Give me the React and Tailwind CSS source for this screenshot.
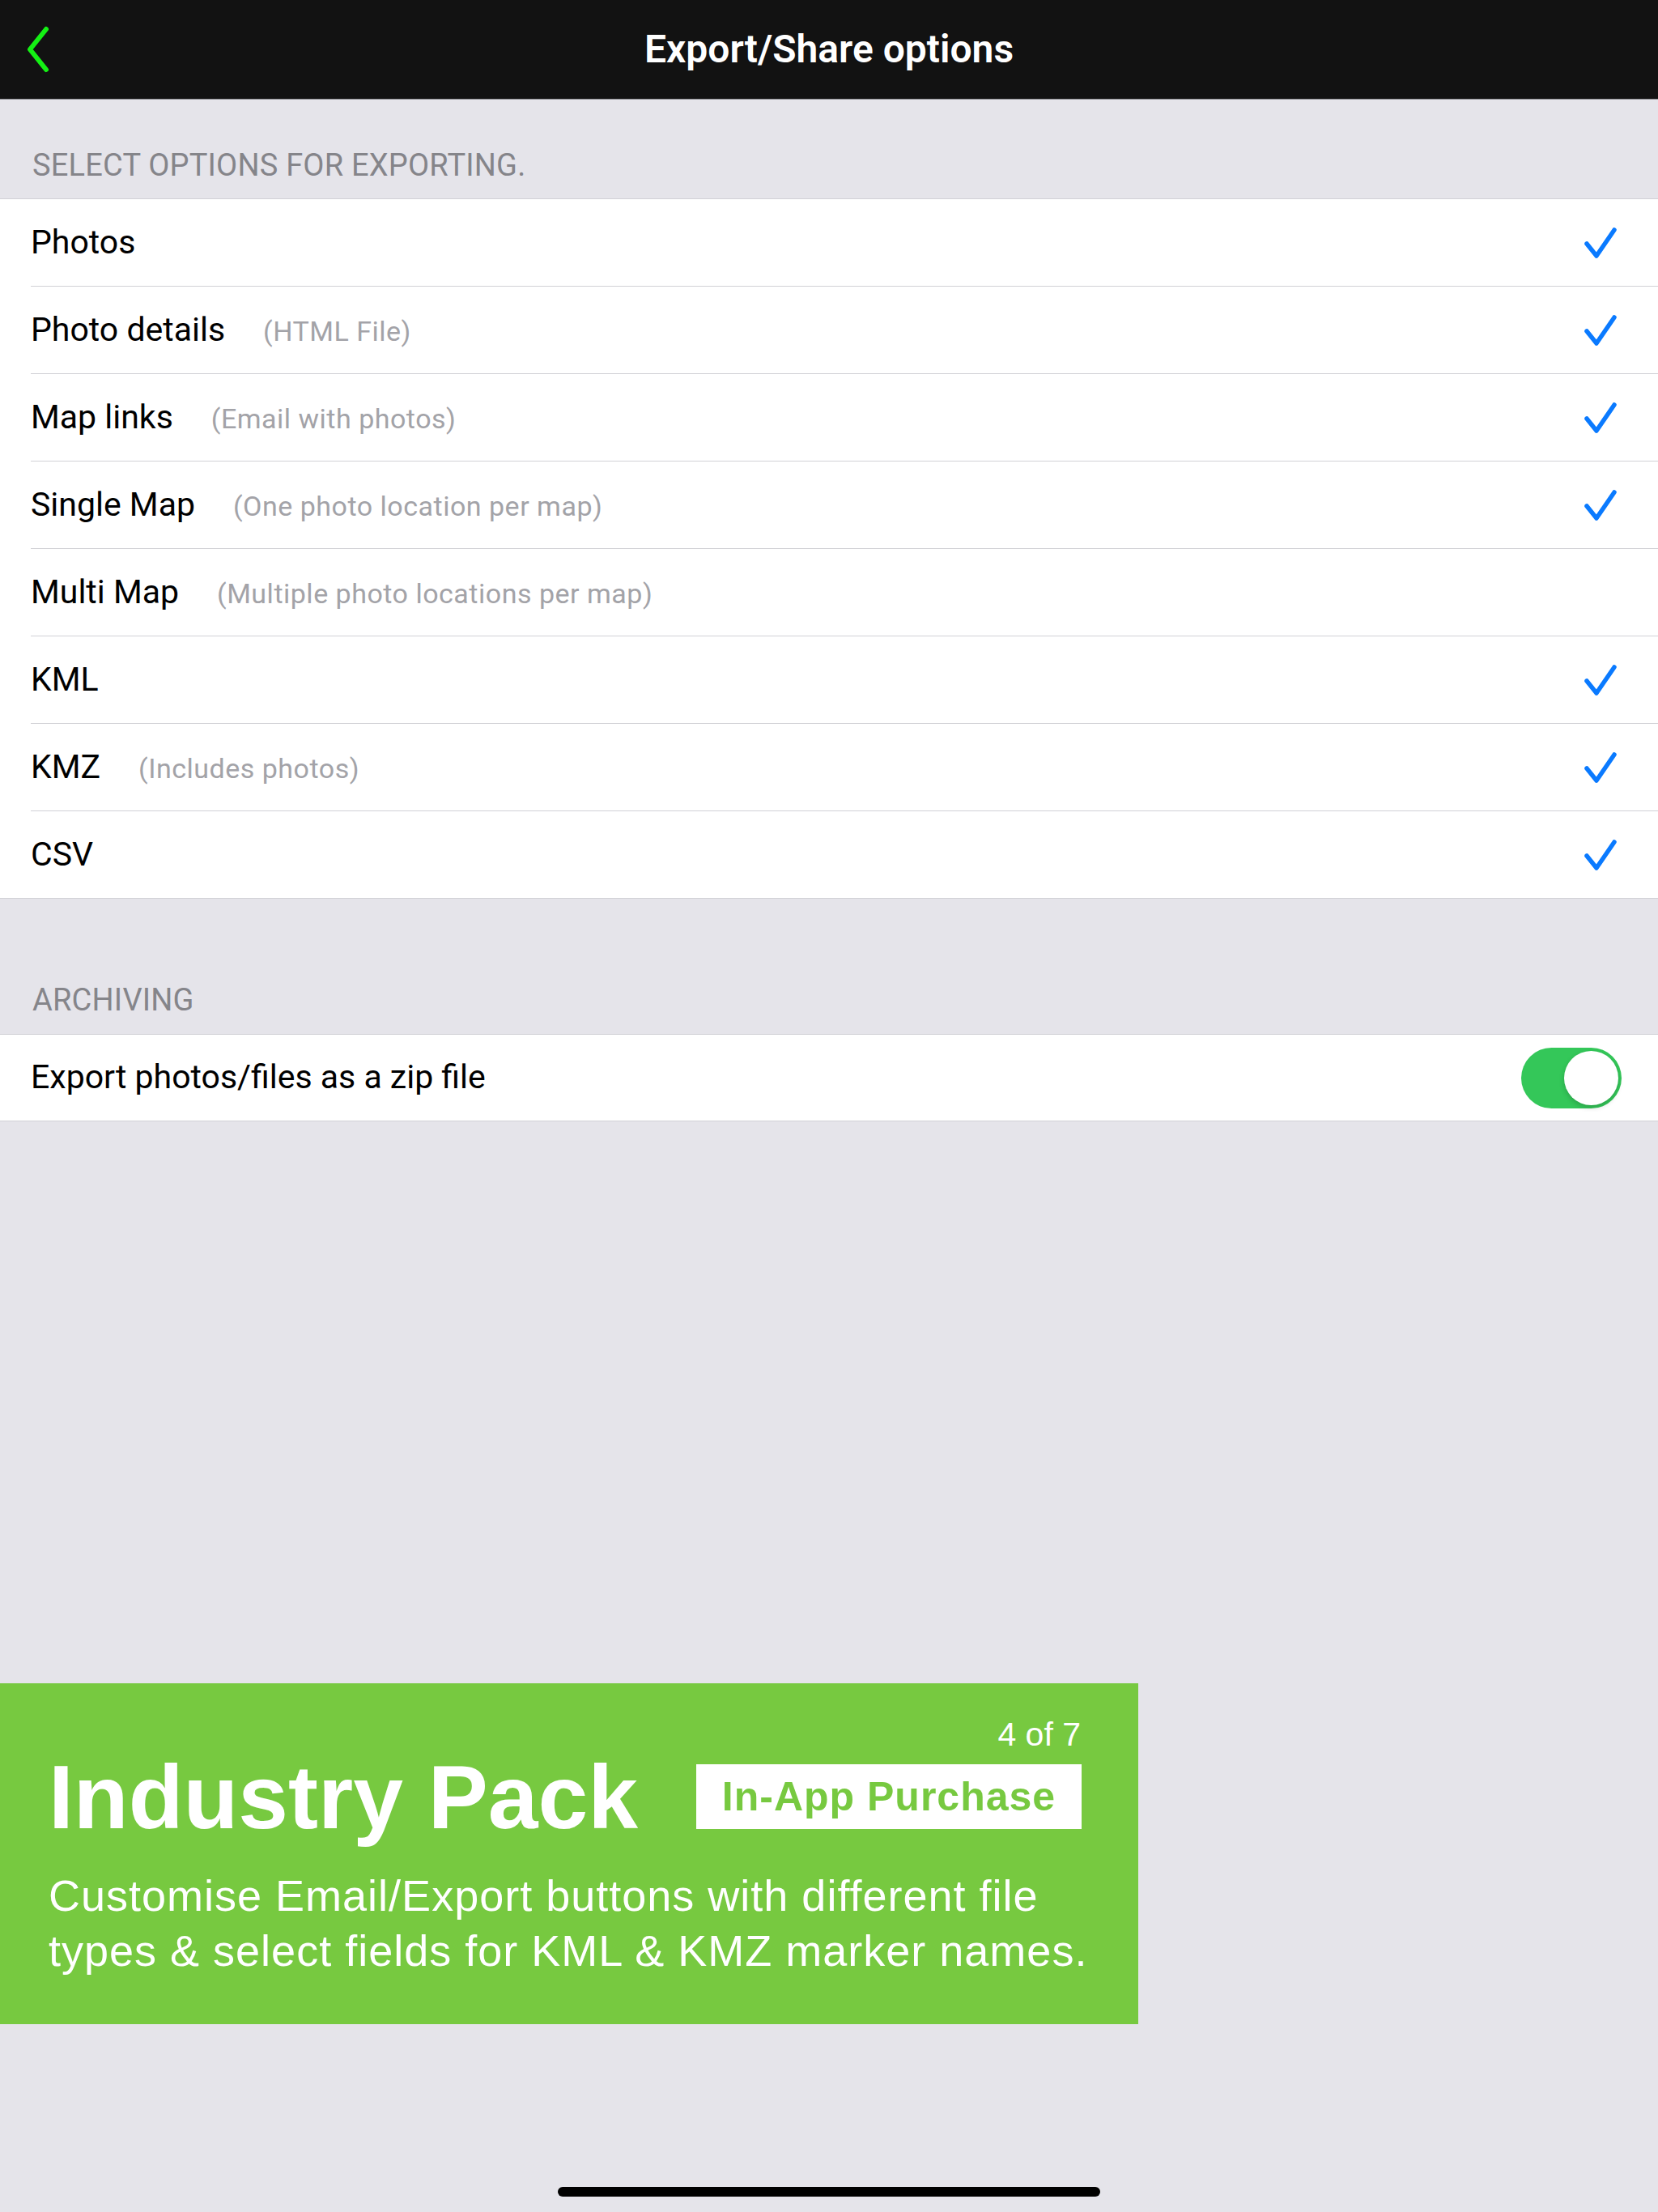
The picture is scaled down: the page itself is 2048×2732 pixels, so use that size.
import React from "react";

const rows = [
  { label: "Photos", sub: "", checked: true },
  { label: "Photo details", sub: "(HTML File)", checked: true },
  { label: "Map links", sub: "(Email with photos)", checked: true },
  { label: "Single Map", sub: "(One photo location per map)", checked: true },
  { label: "Multi Map", sub: "(Multiple photo locations per map)", checked: false },
  { label: "KML", sub: "", checked: true },
  { label: "KMZ", sub: "(Includes photos)", checked: true },
  { label: "CSV", sub: "", checked: true },
];

function Check() {
  return (
    <svg width="40" height="40" viewBox="0 0 40 40" fill="none">
      <polyline
        points="3,21 15,36 37,4"
        stroke="#0a7aff"
        strokeWidth="5.5"
        strokeLinecap="round"
        strokeLinejoin="round"
      />
    </svg>
  );
}

export default function App() {
  return (
    <div className="min-h-[2732px] w-[2048px] bg-[#e5e4ea] flex flex-col font-[family-name:Roboto,sans-serif]">
      {/* Nav bar */}
      <div className="h-[123px] bg-[#121212] border-b border-[#8e8e93] grid grid-cols-[1fr_auto_1fr] items-center">
        <div className="pl-[29px] flex items-center">
          <svg width="36" height="58" viewBox="0 0 36 58" fill="none">
            <path
              d="M28 4 L8 29 L28 54"
              stroke="#14f014"
              strokeWidth="6"
              strokeLinecap="round"
              strokeLinejoin="round"
            />
          </svg>
        </div>
        <div className="text-white text-[48px] font-semibold leading-none">Export/Share options</div>
        <div />
      </div>

      {/* Section 1 header */}
      <div className="h-[122px] flex items-end pb-[18px] pl-[40px]">
        <span className="text-[38px] tracking-[0.2px] leading-[46px] text-[#85858a]">SELECT OPTIONS FOR EXPORTING.</span>
      </div>

      {/* Section 1 list */}
      <div className="bg-white border-y border-[#d1d1d6]">
        {rows.map((r, i) => (
          <div key={r.label} className="pl-[38px]">
            <div
              className={
                i < rows.length - 1
                  ? "h-[108px] border-b border-[#d1d1d6] flex items-center pr-[51px]"
                  : "h-[107px] flex items-center pr-[51px]"
              }
            >
              <div className="flex-1 flex items-baseline gap-[47px]">
                <span className="text-[41px] text-black">{r.label}</span>
                {r.sub ? (
                  <span className="text-[34px] tracking-[0.5px] text-[#a3a3a8]">{r.sub}</span>
                ) : null}
              </div>
              {r.checked ? <Check /> : null}
            </div>
          </div>
        ))}
      </div>

      {/* Archiving header */}
      <div className="h-[167px] flex items-end pb-[19px] pl-[40px]">
        <span className="text-[38px] tracking-[0.2px] leading-[46px] text-[#85858a]">ARCHIVING</span>
      </div>

      {/* Toggle row */}
      <div className="bg-white border-y border-[#d1d1d6]">
        <div className="h-[106px] flex items-center pl-[38px] pr-[45px]">
          <span className="flex-1 text-[41px] text-black">Export photos/files as a zip file</span>
          <div className="w-[124px] h-[75px] rounded-full bg-[#34c759] flex items-center justify-end pr-[4px]">
            <div className="w-[67px] h-[67px] rounded-full bg-white shadow-[0_3px_6px_rgba(0,0,0,0.18)]" />
          </div>
        </div>
      </div>

      {/* Promo banner */}
      <div className="mt-[694px] w-[1406px] h-[421px] bg-[#77c940] pl-[60px] pr-[71px] pt-[40px] font-[family-name:'Liberation_Sans',Arial,sans-serif] text-white">
        <div className="flex justify-end text-[41px] leading-[46px]">4 of 7</div>
        <div className="flex justify-between items-start">
          <div className="text-[111px] font-bold leading-[110px] whitespace-nowrap">Industry Pack</div>
          <div className="mt-[14px] mr-[-1px] h-[80px] w-[476px] bg-white flex items-center justify-center">
            <span className="text-[50px] font-bold tracking-[1px] text-[#77c940] leading-none whitespace-nowrap">In-App Purchase</span>
          </div>
        </div>
        <div className="mt-[32px] text-[54px] leading-[68px] tracking-[1px] whitespace-nowrap">
          Customise Email/Export buttons with different file
          <br />
          types &amp; select fields for KML &amp; KMZ marker names.
        </div>
      </div>

      {/* Home indicator */}
      <div className="mt-[201px] flex justify-center">
        <div className="w-[670px] h-[12px] rounded-full bg-black" />
      </div>
    </div>
  );
}
